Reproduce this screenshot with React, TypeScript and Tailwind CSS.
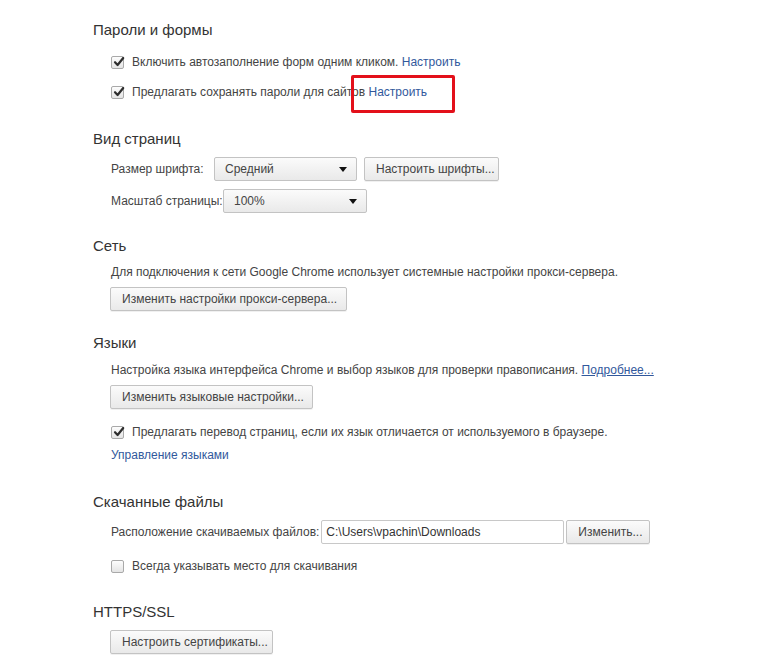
import React from 'react';

const font = { fontFamily: '"Liberation Sans", Arial, sans-serif' };

const Check = ({ checked }: { checked: boolean }) => (
  <span className="relative inline-flex h-[13px] w-[13px] shrink-0 items-center justify-center rounded-[2px] border border-[#a9a9a9] bg-gradient-to-b from-[#fdfdfd] to-[#e4e4e4]">
    {checked && (
      <svg viewBox="0 0 12 12" className="absolute -top-[1px] left-[1px] h-[12px] w-[12px]">
        <path d="M2 6.2 L4.6 9 L10.2 2" fill="none" stroke="#2d2d2d" strokeWidth="2.2" strokeLinecap="round" strokeLinejoin="round" />
      </svg>
    )}
  </span>
);

const Button = ({ children, className = '' }: { children: React.ReactNode; className?: string }) => (
  <div className={`inline-flex h-[24px] items-center whitespace-nowrap rounded-[2px] border border-[#c3c3c3] bg-gradient-to-b from-[#fbfbfb] to-[#e9e9e9] px-[11px] text-[12px] text-[#444] shadow-[0_1px_0_rgba(0,0,0,0.06)] ${className}`}>
    {children}
  </div>
);

const Select = ({ value, className = '' }: { value: string; className?: string }) => (
  <div className={`flex h-[24px] items-center justify-between rounded-[2px] border border-[#c3c3c3] bg-gradient-to-b from-[#fbfbfb] to-[#e9e9e9] pl-[10px] pr-[9px] text-[12px] text-[#444] ${className}`}>
    <span>{value}</span>
    <svg viewBox="0 0 8 5" className="h-[5px] w-[8px]">
      <path d="M0 0 H8 L4 5 Z" fill="#111" />
    </svg>
  </div>
);

const Heading = ({ children, className = '' }: { children: React.ReactNode; className?: string }) => (
  <h3 className={`h-[20px] whitespace-nowrap text-[15px] leading-[20px] text-[#333] ${className}`}>{children}</h3>
);

const link = 'text-[#31589c]';

export default function App() {
  return (
    <div className="min-h-[666px] w-[776px] whitespace-nowrap bg-white text-[12px] text-[#444]" style={font}>
      <div className="pl-[93px] pt-[20px]">
        {/* Пароли и формы */}
        <Heading>Пароли и формы</Heading>
        <div className="ml-[18px] mt-[12px] flex h-[20px] items-center gap-[8px]">
          <Check checked />
          <span>
            Включить автозаполнение форм одним кликом. <span className={link}>Настроить</span>
          </span>
        </div>
        <div className="ml-[18px] mt-[10px] flex h-[20px] items-center gap-[8px]">
          <Check checked />
          <span>
            Предлагать сохранять пароли для сайтов{' '}
            <span className={`relative ${link}`}>
              Настроить
              <span className="absolute left-[-17px] top-[-10px] h-[38px] w-[104px] rounded-[2px] border-[3px] border-[#e3101a]" />
            </span>
          </span>
        </div>

        {/* Вид страниц */}
        <Heading className="mt-[27px]">Вид страниц</Heading>
        <div className="ml-[18px] mt-[8px] flex items-center">
          <span className="w-[103px]">Размер шрифта:</span>
          <Select value="Средний" className="w-[143px]" />
          <Button className="ml-[7px] w-[135px]">Настроить шрифты...</Button>
        </div>
        <div className="ml-[18px] mt-[8px] flex items-center">
          <span className="w-[112px]">Масштаб страницы:</span>
          <Select value="100%" className="w-[144px]" />
        </div>

        {/* Сеть */}
        <Heading className="mt-[23px]">Сеть</Heading>
        <div className="ml-[18px] mt-[7px] leading-[18px]">
          Для подключения к сети Google Chrome использует системные настройки прокси-сервера.
        </div>
        <Button className="ml-[17px] mt-[6px] w-[237px]">Изменить настройки прокси-сервера...</Button>

        {/* Языки */}
        <Heading className="mt-[22px]">Языки</Heading>
        <div className="ml-[18px] mt-[8px] leading-[18px]">
          Настройка языка интерфейса Chrome и выбор языков для проверки правописания.{' '}
          <span className={`${link} underline`}>Подробнее...</span>
        </div>
        <Button className="ml-[17px] mt-[6px] w-[203px]">Изменить языковые настройки...</Button>
        <div className="ml-[18px] mt-[13px] flex h-[20px] items-center gap-[8px]">
          <Check checked />
          <span>Предлагать перевод страниц, если их язык отличается от используемого в браузере.</span>
        </div>
        <div className={`ml-[18px] mt-[4px] leading-[18px] ${link}`}>Управление языками</div>

        {/* Скачанные файлы */}
        <Heading className="mt-[28px]">Скачанные файлы</Heading>
        <div className="ml-[18px] mt-[8px] flex items-center gap-[2px]">
          <span className="shrink-0">Расположение скачиваемых файлов:</span>
          <div className="flex h-[24px] w-[243px] items-center rounded-[2px] border border-[#c8c8c8] bg-white pl-[4px] text-[#333]">
            C:\Users\vpachin\Downloads
          </div>
          <Button className="w-[84px]">Изменить...</Button>
        </div>
        <div className="ml-[18px] mt-[12px] flex h-[20px] items-center gap-[8px]">
          <Check checked={false} />
          <span>Всегда указывать место для скачивания</span>
        </div>

        {/* HTTPS/SSL */}
        <Heading className="mt-[26px]">HTTPS/SSL</Heading>
        <Button className="ml-[17px] mt-[8px] w-[163px]">Настроить сертификаты...</Button>
      </div>
    </div>
  );
}
